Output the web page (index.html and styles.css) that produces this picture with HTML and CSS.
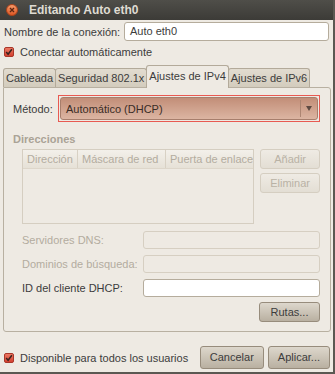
FILE: index.html
```html
<!DOCTYPE html>
<html lang="es">
<head>
  <meta charset="UTF-8">
  <title>Editando Auto eth0</title>
  <link rel="stylesheet" href="styles.css">
</head>
<body>
  <div class="window">
    <div class="titlebar">
      <svg class="close" width="12" height="12" viewBox="0 0 12 12">
        <defs>
          <linearGradient id="cl" x1="0" y1="0" x2="0" y2="1">
            <stop offset="0" stop-color="#f79c6c"/>
            <stop offset="1" stop-color="#dd5522"/>
          </linearGradient>
        </defs>
        <circle cx="6" cy="6" r="5.5" fill="url(#cl)" stroke="#a9421b"/>
        <path d="M4 4 L8 8 M8 4 L4 8" stroke="#5a2612" stroke-width="1.3"/>
      </svg>
      <span class="title">Editando Auto eth0</span>
    </div>

    <div class="content">
      <div class="name-row">
        <label>Nombre de la conexión:</label>
        <div class="entry">Auto eth0</div>
      </div>

      <div class="check-row">
        <svg class="check" width="10" height="10" viewBox="0 0 10 10">
          <defs>
            <linearGradient id="cb1" x1="0" y1="0" x2="0" y2="1">
              <stop offset="0" stop-color="#ee7c66"/>
              <stop offset="1" stop-color="#d23e2e"/>
            </linearGradient>
          </defs>
          <rect x="0.5" y="0.5" width="9" height="9" rx="1.5" fill="url(#cb1)" stroke="#a9372a"/>
          <path d="M2.2 5 L4.1 7.2 L7.9 2.3" fill="none" stroke="#3a221e" stroke-width="1.5"/>
        </svg>
        <span>Conectar automáticamente</span>
      </div>

      <div class="tabs">
        <div class="tab">Cableada</div>
        <div class="tab">Seguridad 802.1x</div>
        <div class="tab active">Ajustes de IPv4</div>
        <div class="tab">Ajustes de IPv6</div>
      </div>

      <div class="page">
        <div class="method-row">
          <span class="method-label">Método:</span>
          <div class="combo-wrap">
            <div class="combo">
              <span class="combo-text">Automático (DHCP)</span>
              <span class="combo-sep"></span>
              <span class="combo-arrow"></span>
            </div>
          </div>
        </div>

        <div class="section-title">Direcciones</div>

        <div class="addr">
          <div class="table">
            <div class="thead">
              <div class="th col-addr">Dirección</div>
              <div class="th col-mask">Máscara de red</div>
              <div class="th col-gw">Puerta de enlace</div>
            </div>
          </div>
          <div class="side-buttons">
            <div class="btn disabled">Añadir</div>
            <div class="btn disabled">Eliminar</div>
          </div>
        </div>

        <div class="form">
          <div class="form-row">
            <span class="form-label dim">Servidores DNS:</span>
            <div class="entry off"></div>
          </div>
          <div class="form-row">
            <span class="form-label dim">Dominios de búsqueda:</span>
            <div class="entry off"></div>
          </div>
          <div class="form-row">
            <span class="form-label">ID del cliente DHCP:</span>
            <div class="entry"></div>
          </div>
        </div>

        <div class="routes">
          <div class="btn">Rutas...</div>
        </div>
      </div>

      <div class="footer">
        <svg class="check" width="10" height="10" viewBox="0 0 10 10">
          <defs>
            <linearGradient id="cb2" x1="0" y1="0" x2="0" y2="1">
              <stop offset="0" stop-color="#ee7c66"/>
              <stop offset="1" stop-color="#d23e2e"/>
            </linearGradient>
          </defs>
          <rect x="0.5" y="0.5" width="9" height="9" rx="1.5" fill="url(#cb2)" stroke="#a9372a"/>
          <path d="M2.2 5 L4.1 7.2 L7.9 2.3" fill="none" stroke="#3a221e" stroke-width="1.5"/>
        </svg>
        <span class="footer-text">Disponible para todos los usuarios</span>
        <div class="btn">Cancelar</div>
        <div class="btn">Aplicar...</div>
      </div>
    </div>
  </div>
</body>
</html>
```

FILE: styles.css
```css
body {
  margin: 0;
  font-family: "Liberation Sans", Arial, sans-serif;
  font-size: 11px;
  color: #3c3c3c;
  background: #eeeae3;
}

.window {
  width: 335px;
  height: 374px;
  box-sizing: border-box;
  border-right: 2px solid #5b5852;
  border-bottom: 2px solid #5b5852;
  background: #eeeae3;
  display: flex;
  flex-direction: column;
  overflow: hidden;
}

.titlebar {
  flex: none;
  height: 20px;
  display: flex;
  align-items: center;
  background: linear-gradient(#4f4e49, #3c3b37);
}

.close { margin-left: 6px; }

.title {
  margin-left: 11px;
  color: #dfdbd2;
  font-weight: bold;
  font-size: 12px;
}

.content {
  flex: 1;
  display: flex;
  flex-direction: column;
  padding: 2px 2px 0 3px;
}

.name-row {
  display: flex;
  align-items: center;
  padding-right: 2px;
}

.name-row label {
  width: 120px;
  padding-left: 1px;
}

.entry {
  flex: 1;
  height: 19px;
  box-sizing: border-box;
  border: 1px solid #b5ac9c;
  border-radius: 3px;
  background: #fff;
  padding: 0 5px;
  line-height: 17px;
}

.entry.off {
  background: #eeeae3;
  border-color: #d6cfc2;
}

.check-row {
  display: flex;
  align-items: center;
  height: 14px;
  margin-top: 4px;
  padding-left: 1px;
}

.check { margin-right: 6px; flex: none; }

/* tabs */
.tabs {
  display: flex;
  align-items: flex-end;
  height: 22px;
  margin-top: 6px;
  position: relative;
  z-index: 1;
}

.tab {
  height: 19px;
  box-sizing: border-box;
  padding: 0 2px;
  line-height: 18px;
  border: 1px solid #b3aa9a;
  border-bottom: none;
  border-radius: 3px 3px 0 0;
  background: linear-gradient(#e2dcd0, #d3ccbd);
  margin-right: -1px;
}

.tab.active {
  height: 23px;
  margin-bottom: -1px;
  line-height: 21px;
  background: #eeeae3;
}

.page {
  height: 245px;
  box-sizing: border-box;
  border: 1px solid #b8b0a1;
  border-radius: 0 3px 3px 3px;
  padding: 7px 10px 0 9px;
}

.method-row {
  display: flex;
  align-items: center;
}

.method-label { width: 45px; }

.combo-wrap {
  flex: 1;
  border: 1px solid #e85a52;
  padding: 1px;
}

.combo {
  height: 23px;
  box-sizing: border-box;
  display: flex;
  align-items: center;
  border: 1px solid #a77e6c;
  border-radius: 3px;
  background: linear-gradient(#c28e78, #dcb5a2);
  color: #3a2c26;
  padding-left: 5px;
}

.combo-text { flex: 1; }

.combo-sep {
  width: 1px;
  height: 17px;
  background: #ad8572;
  margin-right: 5px;
}

.combo-arrow {
  width: 0;
  height: 0;
  border-left: 3px solid transparent;
  border-right: 3px solid transparent;
  border-top: 5px solid #5e4a42;
  margin-right: 5px;
}

.section-title {
  margin-top: 10px;
  font-weight: bold;
  color: #aaa396;
  line-height: 14px;
}

.addr {
  display: flex;
  gap: 6px;
  margin-top: 3px;
  padding-left: 9px;
}

.table {
  flex: 1;
  height: 75px;
  box-sizing: border-box;
  border: 1px solid #d5cec1;
  background: #eeeae3;
}

.thead {
  display: flex;
  height: 18px;
  background: linear-gradient(#f3f0ea, #e6e1d7);
  border-bottom: 1px solid #ddd6ca;
  color: #b3ac9f;
  line-height: 18px;
}

.th {
  padding-left: 4px;
  border-right: 1px solid #d8d1c4;
  white-space: nowrap;
  overflow: hidden;
}

.col-addr { width: 50px; }
.col-mask { width: 83px; }
.col-gw { flex: 1; border-right: none; }

.side-buttons {
  display: flex;
  flex-direction: column;
  gap: 4px;
  width: 61px;
}

.btn {
  height: 20px;
  box-sizing: border-box;
  padding: 0 9px;
  line-height: 18px;
  text-align: center;
  border: 1px solid #978c7c;
  border-radius: 3px;
  background: linear-gradient(#ddd7cc, #b9b0a1);
  color: #3c3c3c;
}

.btn.disabled {
  border-color: #d5cec1;
  background: linear-gradient(#efebe4, #e3ded4);
  color: #b9b2a5;
}

.form {
  margin-top: 7px;
  padding-left: 9px;
  display: flex;
  flex-direction: column;
  gap: 6px;
}

.form-row {
  display: flex;
  align-items: center;
}

.form-label { width: 121px; }

.form-label.dim { color: #b3ac9f; }

.form-row .entry { height: 18px; }

.routes {
  display: flex;
  justify-content: flex-end;
  margin-top: 5px;
}

.routes .btn { width: 61px; }

.footer {
  display: flex;
  align-items: center;
  gap: 4px;
  height: 23px;
  margin-top: 14px;
  padding-left: 1px;
  padding-right: 1px;
}

.footer .check { margin-right: 2px; }

.footer-text { flex: 1; }

.footer .btn {
  height: 23px;
  line-height: 21px;
}
```
